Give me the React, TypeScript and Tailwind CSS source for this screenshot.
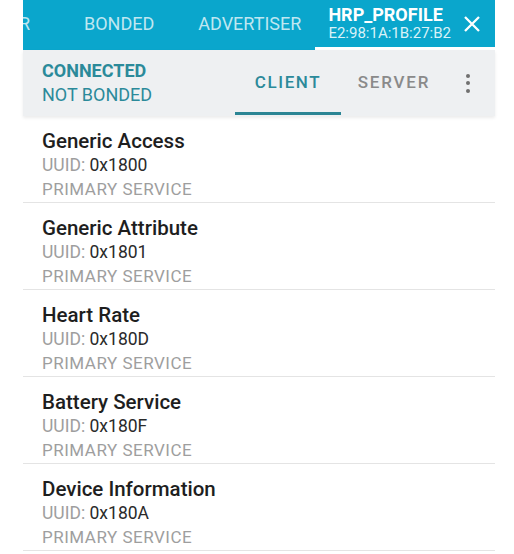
import React from "react";

interface Service {
  name: string;
  uuid: string;
}

const services: Service[] = [
  { name: "Generic Access", uuid: "0x1800" },
  { name: "Generic Attribute", uuid: "0x1801" },
  { name: "Heart Rate", uuid: "0x180D" },
  { name: "Battery Service", uuid: "0x180F" },
  { name: "Device Information", uuid: "0x180A" },
];

const App = () => {
  return (
    <div className="w-[514px] h-[554px] bg-white overflow-hidden font-['Roboto',sans-serif]">
      <div className="ml-[23px] w-[472px]">
        {/* Top tab bar */}
        <div className="flex h-[50px] bg-[#0aa6cc] text-[18px] text-[#bfe7f1]">
          <div className="w-[7px] overflow-hidden flex justify-end items-center pb-[3px]">
            <span className="shrink-0">SCANNER</span>
          </div>
          <div className="ml-[54px] flex items-center pb-[3px]">BONDED</div>
          <div className="ml-[44px] flex items-center pb-[3px]">ADVERTISER</div>
          <div className="ml-[14px] flex-1 flex items-center border-b-[3px] border-white pl-[13px] text-white">
            <div className="flex flex-col">
              <span className="text-[18px] font-bold leading-[19px]">HRP_PROFILE</span>
              <span className="text-[15px] leading-[18px] text-[#d9f2f8]">E2:98:1A:1B:27:B2</span>
            </div>
            <svg className="ml-auto mr-[14px]" width="18" height="18" viewBox="0 0 18 18" fill="none">
              <path d="M2 2 L16 16 M16 2 L2 16" stroke="white" strokeWidth="2.3" />
            </svg>
          </div>
        </div>

        {/* Status + client/server tabs */}
        <div className="relative z-10 flex h-[66px] bg-[#eef0f2] shadow-[0_2px_3px_rgba(0,0,0,0.08)]">
          <div className="w-[212px] pl-[19px] flex flex-col justify-center text-[#2b8a9a] text-[18px] leading-6">
            <span className="font-bold">CONNECTED</span>
            <span>NOT BONDED</span>
          </div>
          <div className="w-[106px] flex flex-col">
            <div className="flex-1 flex items-center justify-center text-[17px] font-medium tracking-[1.6px] text-[#2b8a9a] pt-[3px]">
              CLIENT
            </div>
            <div className="h-[3px] mb-[1px] bg-[#2b8594]" />
          </div>
          <div className="w-[106px] flex items-center justify-center text-[17px] font-medium tracking-[1.8px] text-[#8a8a8a]">
            SERVER
          </div>
          <div className="w-[42px] flex flex-col items-center justify-center gap-[3.5px]">
            <div className="w-[4px] h-[4px] rounded-full bg-[#707070]" />
            <div className="w-[4px] h-[4px] rounded-full bg-[#707070]" />
            <div className="w-[4px] h-[4px] rounded-full bg-[#707070]" />
          </div>
        </div>

        {/* Services list */}
        <ul>
          {services.map((s) => (
            <li key={s.uuid} className="h-[87px] border-b border-[#e4e4e4] pl-[19px] pt-[14px]">
              <div className="text-[20.5px] leading-[23px] font-medium text-[#1e1e1e]">{s.name}</div>
              <div className="text-[17.5px] leading-6 text-[#9e9e9e]">
                UUID: <span className="text-[#2a2a2a]">{s.uuid}</span>
              </div>
              <div className="text-[17px] tracking-[0.5px] leading-6 text-[#9e9e9e]">PRIMARY SERVICE</div>
            </li>
          ))}
        </ul>
      </div>
    </div>
  );
};

export default App;
